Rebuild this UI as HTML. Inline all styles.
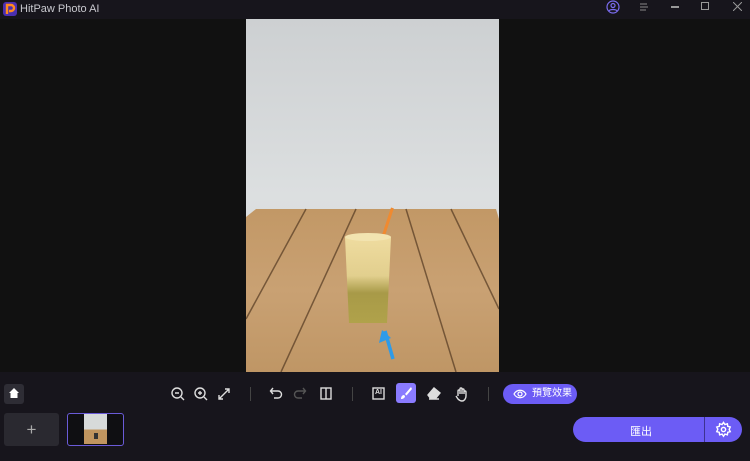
<!DOCTYPE html>
<html><head><meta charset="utf-8"><style>
*{margin:0;padding:0;box-sizing:border-box}
body{width:750px;height:461px;background:#121212;font-family:"Liberation Sans","Noto Sans CJK TC",sans-serif;position:relative;overflow:hidden}
.title{position:absolute;left:0;top:0;width:750px;height:19px;background:#17151c;color:#c8c8ce;font-size:11px}
.main{position:absolute;left:0;top:19px;width:750px;height:353px;background:#111}
.bottom{position:absolute;left:0;top:372px;width:750px;height:89px;background:#17151c}
.ab{position:absolute}
.sep{position:absolute;top:387px;width:1px;height:14px;background:#444}
</style></head><body>
<div class="title">
 <svg class="ab" style="left:3px;top:2px" width="14" height="14" viewBox="0 0 14 14"><rect width="14" height="14" rx="3" fill="#4b2fb0"/><path d="M4 12V3h4a3 3 0 0 1 0 6H6" stroke="#ff8a1e" stroke-width="2.4" fill="none"/></svg>
 <span class="ab" style="left:20px;top:3px">HitPaw Photo AI</span>
 <svg class="ab" style="left:606px;top:0" width="14" height="14" viewBox="0 0 14 14" fill="none" stroke="#7b6cf0" stroke-width="1.2"><circle cx="7" cy="7" r="6"/><circle cx="7" cy="5.5" r="2"/><path d="M3 11c1-2 7-2 8 0"/></svg>
 <svg class="ab" style="left:639px;top:2px" width="10" height="10" stroke="#888" stroke-width="1"><path d="M1 2h7M1 5h8M1 8h6"/></svg>
 <div class="ab" style="left:671px;top:6px;width:8px;height:1.5px;background:#999"></div>
 <div class="ab" style="left:701px;top:2px;width:8px;height:8px;border:1px solid #999"></div>
 <svg class="ab" style="left:733px;top:2px" width="9" height="9" stroke="#999" stroke-width="1"><path d="M0 0l9 9M9 0l-9 9"/></svg>
</div>
<div class="main">
 <svg class="ab" style="left:246px;top:0" width="253" height="353" viewBox="0 0 253 353">
  <defs>
   <linearGradient id="w" x1="0" y1="0" x2="0" y2="1"><stop offset="0" stop-color="#cdd0d2"/><stop offset=".5" stop-color="#dcdfe0"/><stop offset="1" stop-color="#d2d5d6"/></linearGradient>
   <linearGradient id="t" x1="0" y1="0" x2="0" y2="1"><stop offset="0" stop-color="#c29866"/><stop offset=".5" stop-color="#c9a173"/><stop offset="1" stop-color="#bf9665"/></linearGradient>
   <linearGradient id="g" x1="0" y1="0" x2="0" y2="1"><stop offset="0" stop-color="#efdca0"/><stop offset=".45" stop-color="#e2cf8e"/><stop offset=".65" stop-color="#a89a48"/><stop offset="1" stop-color="#b0a24a"/></linearGradient>
  </defs>
  <rect width="253" height="353" fill="url(#w)"/>
  <path d="M10 190h240l3 10v153H0V198z" fill="url(#t)"/>
  <g stroke="#5a3f26" stroke-width="1.5" fill="none" opacity=".75">
   <path d="M60 190L0 300"/><path d="M110 190L35 353"/><path d="M160 190L210 353"/><path d="M205 190L253 290"/>
  </g>
  <rect x="140" y="188" width="3" height="32" fill="#f08a30" transform="rotate(18 141 204)"/>
  <path d="M99 218h46l-4 86h-38z" fill="url(#g)"/>
  <ellipse cx="122" cy="218" rx="23" ry="4" fill="#f2e4b0"/>
  <path d="M139 312l8 28" stroke="#2e9be8" stroke-width="3.5"/>
  <path d="M133 324l3-13l9 8z" fill="#2e9be8"/>
 </svg>
</div>
<div class="bottom"></div>
<div class="ab" style="left:4px;top:384px;width:20px;height:20px;border-radius:3px;background:#2e2d35"></div>
<svg class="ab" style="left:9px;top:388px" width="10" height="10" viewBox="0 0 10 10"><path d="M5 0L0 5h1.5v5h7V5H10z" fill="#fff"/></svg>
<div class="ab" style="left:4px;top:413px;width:55px;height:33px;border-radius:3px;background:#2a2930;color:#aaa;font-size:17px;text-align:center;line-height:33px">+</div>
<div class="ab" style="left:67px;top:413px;width:57px;height:33px;border:1.5px solid #6a5bd8;border-radius:3px;background:#0f0f12;overflow:hidden">
 <div class="ab" style="left:16px;top:0;width:23px;height:30px;background:linear-gradient(#d7dada 0,#d7dada 52%,#c0955f 52%)"></div>
 <div class="ab" style="left:26px;top:19px;width:4px;height:6px;background:#333"></div>
</div>
<svg class="ab" style="left:170px;top:384px" width="340" height="20" viewBox="170 384 340 20" fill="none" stroke="#ddd" stroke-width="1.4">
 <circle cx="177" cy="393" r="5"/><path d="M181 397l3 3M175 393h4"/>
 <circle cx="200" cy="393" r="5"/><path d="M204 397l3 3M198 393h4M200 391v4"/>
 <path d="M219 399l10-10M219 395v4h4M229 393v-4h-4"/>
 <path d="M271 391h7a3.5 3.5 0 0 1 0 7h-4M273 388l-2.5 3 2.5 3"/>
 <path d="M305 391h-7a3.5 3.5 0 0 0 0 7h4M303 388l2.5 3-2.5 3" stroke="#555"/>
 <rect x="321" y="388" width="10" height="11"/><path d="M326 388v11"/>
 <rect x="373" y="388" width="11" height="11"/>
 <path d="M429 399h10M428 395l6-7 6 5-5 6h-4z" fill="#ddd"/>
 <path d="M458 396v-5a1 1 0 0 1 2 0v3v-5a1 1 0 0 1 2 0v5v-4a1 1 0 0 1 2 0v4v-2a1 1 0 0 1 2 0v4c0 3-2 5-4 5s-3-1-4-2l-2-3"/>
</svg>
<span class="ab" style="left:375px;top:389px;font-size:7px;color:#ddd;font-weight:bold">AI</span>
<div class="sep" style="left:250px"></div><div class="sep" style="left:352px"></div><div class="sep" style="left:488px"></div>
<div class="ab" style="left:396px;top:383px;width:20px;height:20px;border-radius:3px;background:#8a7bff"></div>
<svg class="ab" style="left:398px;top:385px" width="16" height="16" viewBox="0 0 16 16"><path d="M13 2L7 9l1.5 1.5L14 4z M6 10c-2 0-3 2-3 4 2 0 4-1 4-3z" fill="#fff"/></svg>
<div class="ab" style="left:503px;top:384px;width:74px;height:20px;border-radius:10px;background:#6c5cf5;color:#fff;font-size:10px;line-height:20px;padding-left:29px">預覽效果</div>
<svg class="ab" style="left:513px;top:388px" width="14" height="12" viewBox="0 0 14 12" fill="none" stroke="#fff" stroke-width="1.2"><path d="M1 6c3-5 9-5 12 0c-3 5-9 5-12 0z"/><circle cx="7" cy="6" r="2"/></svg>
<div class="ab" style="left:573px;top:417px;width:169px;height:25px;border-radius:13px;background:#6c5cf5"></div>
<div class="ab" style="left:704px;top:417px;width:1px;height:25px;background:#3d3290"></div>
<span class="ab" style="left:630px;top:423px;color:#fff;font-size:11px">匯出</span>
<svg class="ab" style="left:715px;top:421px" width="17" height="17" viewBox="0 0 24 24" fill="none" stroke="#fff" stroke-width="2"><circle cx="12" cy="12" r="3"/><path d="M12 2l2 3 3.5-1 .5 3.5 3.5 1-1.5 3.5 1.5 3-3.5 1-.5 3.5-3.5-1-2 3-2-3-3.5 1-.5-3.5-3.5-1 1.5-3.5L2.5 8.5 6 7.5 6.5 4 10 5z"/></svg>
</body></html>
